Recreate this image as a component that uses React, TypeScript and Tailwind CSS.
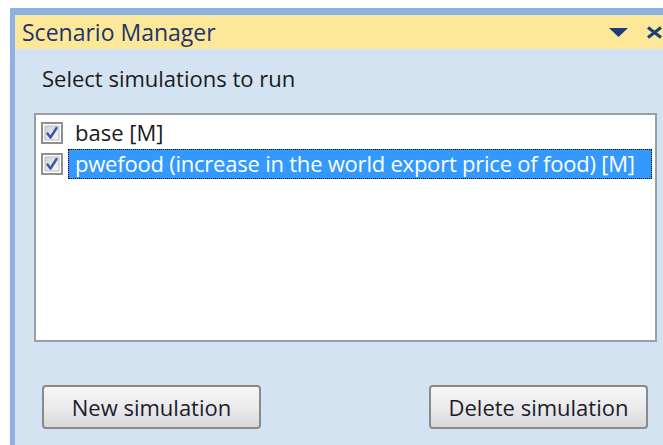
import React from 'react';

const font = { fontFamily: '"Open Sans", "Noto Sans", sans-serif' };

const CheckBox = () => (
  <svg width="22" height="22" viewBox="0 0 22 22" className="shrink-0">
    <defs>
      <linearGradient id="cbFill" x1="0" y1="0" x2="1" y2="1">
        <stop offset="0" stopColor="#cfd3d8" />
        <stop offset="1" stopColor="#f7f8f9" />
      </linearGradient>
    </defs>
    <rect x="1" y="1" width="20" height="20" fill="#fff" stroke="#8e8f8f" strokeWidth="2" />
    <rect x="4" y="4" width="14" height="14" fill="url(#cbFill)" stroke="#b9bcc0" strokeWidth="1" />
    <path d="M6.5 11.5 L9.5 15.5 L15.5 6" fill="none" stroke="#3b57a0" strokeWidth="2.4" strokeLinecap="round" strokeLinejoin="round" />
  </svg>
);

const Button = ({ label }: { label: string }) => (
  <button className="h-[44px] w-[219px] rounded-[4px] border-2 border-[#8a8a8a] bg-gradient-to-b from-[#f6f6f6] via-[#ebebeb] to-[#d9d9d9] text-[22px] text-[#1b1b2e]">
    {label}
  </button>
);

const App = () => {
  const sims = [
    { name: 'base [M]', selected: false },
    { name: 'pwefood (increase in the world export price of food) [M]', selected: true },
  ];

  return (
    <div className="h-[445px] w-[663px] overflow-hidden bg-white pl-[10px] pt-[8px]" style={font}>
      <div className="flex h-full flex-col border-l-[5px] border-t-[7px] border-[#8db1e2] bg-[#d4e3f2]">
        {/* title bar */}
        <div className="flex h-[34px] items-center bg-[#fde899] pl-[7px]">
          <span className="text-[23px] text-[#1f3468]">Scenario Manager</span>
          <div className="ml-auto flex items-center">
            <svg width="19" height="9" viewBox="0 0 19 9" className="mr-[18px]">
              <path d="M0 0 H19 L9.5 9 Z" fill="#1d3d78" />
            </svg>
            <svg width="17" height="13" viewBox="0 0 17 13">
              <path d="M2 1.5 L15 11.5 M15 1.5 L2 11.5" stroke="#1d3d78" strokeWidth="3" />
            </svg>
          </div>
        </div>

        <div className="pl-[27px] pt-[15px] text-[22px] leading-[28px] text-[#1a1a1a]">
          Select simulations to run
        </div>

        {/* simulation list */}
        <div className="ml-[19px] mt-[21px] h-[229px] w-[623px] border-2 border-[#9a9fa6] bg-white pt-[2px]">
          {sims.map((s) => (
            <div key={s.name} className="flex h-[31px] items-center pl-[5px]">
              <CheckBox />
              <span
                className={
                  s.selected
                    ? 'ml-[5px] flex h-[30px] w-[584px] items-center whitespace-nowrap border border-dotted border-black bg-[#3399ff] pl-[6px] text-[22px] tracking-[-0.01em] text-white'
                    : 'ml-[5px] flex h-[30px] items-center pl-[7px] text-[22px] text-[#1a1a1a]'
                }
              >
                {s.name}
              </span>
            </div>
          ))}
        </div>

        <div className="ml-[27px] mt-[43px] flex w-[606px] justify-between">
          <Button label="New simulation" />
          <Button label="Delete simulation" />
        </div>
      </div>
    </div>
  );
};

export default App;
